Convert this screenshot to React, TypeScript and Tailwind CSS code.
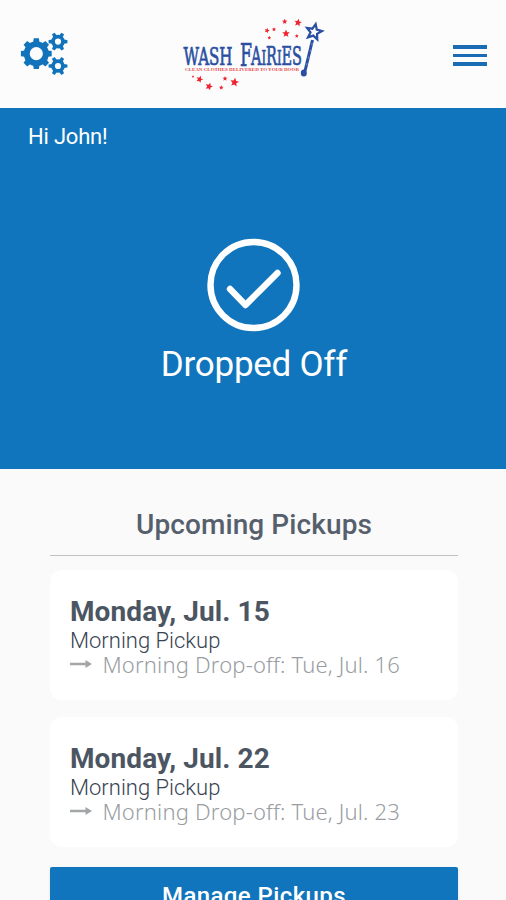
interface Pickup {
  date: string;
  pickup: string;
  dropOff: string;
}

const pickups: Pickup[] = [
  {
    date: 'Monday, Jul. 15',
    pickup: 'Morning Pickup',
    dropOff: 'Morning Drop-off: Tue, Jul. 16',
  },
  {
    date: 'Monday, Jul. 22',
    pickup: 'Morning Pickup',
    dropOff: 'Morning Drop-off: Tue, Jul. 23',
  },
];

interface GearProps {
  cx: number;
  cy: number;
  body: number;
  outer: number;
  hole: number;
  tooth: number;
  angles: number[];
}

function Gear(props: GearProps) {
  const { cx, cy, body, outer, hole, tooth, angles } = props;
  const ring = (body + hole) / 2;
  return (
    <g transform={`translate(${cx} ${cy})`}>
      <circle r={ring} fill="none" stroke="#1073bb" strokeWidth={body - hole} />
      {angles.map((angle) => (
        <path
          key={angle}
          transform={`rotate(${angle})`}
          d={`M${-tooth * 1.3} ${-ring}L${-tooth} ${-outer}H${tooth}L${tooth * 1.3} ${-ring}Z`}
          fill="#1073bb"
        />
      ))}
    </g>
  );
}

function SettingsIcon() {
  const small = [30, 90, 150, 210, 270, 330];
  return (
    <svg width="48" height="46" viewBox="20 31 48 46">
      <Gear
        cx={36.3}
        cy={53.7}
        body={12.5}
        outer={15.4}
        hole={6.6}
        tooth={2.6}
        angles={[0, 45, 90, 135, 180, 225, 270, 315]}
      />
      <Gear cx={58} cy={41.6} body={6.8} outer={9.4} hole={3.1} tooth={1.6} angles={small} />
      <Gear cx={58} cy={66} body={6.8} outer={9.4} hole={3.1} tooth={1.6} angles={small} />
    </svg>
  );
}

interface StarProps {
  x: number;
  y: number;
  r: number;
  turn?: number;
}

const STAR =
  'M0 -1L.28 -.36L.95 -.31L.42 .14L.59 .81L0 .46L-.59 .81L-.42 .14L-.95 -.31L-.28 -.36Z';

function Star(props: StarProps) {
  const { x, y, r, turn = 0 } = props;
  return (
    <path
      d={STAR}
      transform={`translate(${x} ${y}) rotate(${turn}) scale(${r})`}
      fill="#ee2330"
    />
  );
}

function Logo() {
  return (
    <svg width="146" height="76" viewBox="180 17 146 76">
      <g
        fontFamily="'DejaVu Serif Condensed', 'DejaVu Serif', serif"
        fill="#2a4fa2"
        stroke="#2a4fa2"
        strokeWidth=".7"
      >
        <text x="183.5" y="64.5" fontSize="25" textLength="49" lengthAdjust="spacingAndGlyphs">
          WASH
        </text>
        <text x="240" y="65.5" fontSize="31" textLength="12" lengthAdjust="spacingAndGlyphs">
          F
        </text>
        <text x="251" y="64.5" fontSize="26" textLength="51" lengthAdjust="spacingAndGlyphs">
          A<tspan fontSize="21">I</tspan>R<tspan fontSize="21">I</tspan>ES
        </text>
      </g>
      <text
        x="185"
        y="70.6"
        fontFamily="'Liberation Serif', serif"
        fontWeight="700"
        fontSize="4.6"
        fill="#e5484d"
        textLength="114"
        lengthAdjust="spacingAndGlyphs"
      >
        CLEAN CLOTHES DELIVERED TO YOUR DOOR
      </text>
      <Star x={298} y={22.6} r={4} turn={10} />
      <Star x={284.7} y={21.6} r={2.8} />
      <Star x={286} y={33.6} r={4} />
      <Star x={267} y={30.6} r={2.8} turn={15} />
      <Star x={274} y={29.4} r={2.2} />
      <Star x={296.8} y={36} r={2.1} />
      <Star x={269.3} y={37.8} r={2} />
      <Star x={199.6} y={79.3} r={3.7} turn={20} />
      <Star x={209} y={86.5} r={4} turn={20} />
      <Star x={234.5} y={82.4} r={4.6} turn={10} />
      <Star x={225} y={78.6} r={2.6} />
      <Star x={221.3} y={87.6} r={2.4} />
      <Star x={193} y={76.6} r={1.4} />
      <path d="M312.500 40L305 71" stroke="#2a4fa2" strokeWidth="3" />
      <path d="M312.2 43L304.6 73" stroke="#fcfcfc" strokeWidth=".4" strokeDasharray="2 5" />
      <ellipse cx="303.8" cy="73" rx="3" ry="3.6" fill="#2a4fa2" />
      <path
        d={STAR}
        transform="translate(314 32) rotate(12) scale(8)"
        fill="#fcfcfc"
        stroke="#2a4fa2"
        strokeWidth=".28"
      />
    </svg>
  );
}

function PickupCard(props: { item: Pickup }) {
  const { item } = props;
  return (
    <div className="h-[130px] rounded-xl bg-white px-5 pt-[26px]">
      <div className="text-[28px] leading-8 font-bold tracking-[0.1px] whitespace-nowrap text-[#4c5663]">
        {item.date}
      </div>
      <div className="text-[22px] leading-[25px] font-light whitespace-nowrap text-[#374352]">
        {item.pickup}
      </div>
      <div className="-mt-px flex items-center text-[#999da1]">
        <svg className="mr-[10.5px] mb-px" width="22" height="10" viewBox="0 0 22 10">
          <path d="M0 3.7H15.500V1L22 5L15.500 9V6.3H0Z" fill="#a3a6a9" />
        </svg>
        <span className="font-['Noto_Sans'] text-[22px] leading-[25px] font-light tracking-[0.17px] whitespace-nowrap">
          {item.dropOff}
        </span>
      </div>
    </div>
  );
}

export default function App() {
  return (
    <div className="h-[900px] w-[506px] overflow-hidden bg-[#fafafb] font-[Roboto,sans-serif]">
      <header className="flex h-[108px] bg-[#fcfcfc] pl-5">
        <div className="w-[160px] pt-[31px]">
          <SettingsIcon />
        </div>
        <div className="w-[273px] pt-[17px]">
          <Logo />
        </div>
        <div className="flex flex-col gap-[5px] pt-[45px]">
          <div className="h-[3.5px] w-[34px] bg-[#1a6db5]" />
          <div className="h-[3.5px] w-[34px] bg-[#1a6db5]" />
          <div className="h-[3.5px] w-[34px] bg-[#1a6db5]" />
        </div>
      </header>
      <section className="flex h-[361px] flex-col items-center bg-[#1075bc] pl-[2px] text-white">
        <div className="w-full pt-[15px] pl-[26px] text-[22px] leading-7 tracking-[-0.2px]">
          Hi John!
        </div>
        <svg className="mt-[87px]" width="94" height="94" viewBox="0 0 94 94">
          <g fill="none" stroke="#fff" strokeWidth="6.4" strokeLinecap="round" strokeLinejoin="round">
            <circle cx="46.5" cy="47" r="43" />
            <path d="M23 51L38.500 67L70.500 35" />
          </g>
        </svg>
        <div className="mt-[11px] text-[35px] leading-[44px] tracking-[-0.25px]">Dropped Off</div>
      </section>
      <main className="pr-12 pl-[50px]">
        <h2 className="h-[87px] border-b border-[#bfc1c4] pt-[38px] text-center text-[28px] leading-9 font-medium tracking-[0.1px] text-[#56606c]">
          Upcoming Pickups
        </h2>
        <div className="mt-[14px] flex flex-col gap-[17px]">
          {pickups.map((item) => (
            <PickupCard key={item.date} item={item} />
          ))}
        </div>
        <button className="mt-5 h-16 w-full rounded-[2px] bg-[#1075bc] pb-1.5 text-[24px] font-medium tracking-[0.4px] text-white shadow">
          Manage Pickups
        </button>
      </main>
    </div>
  );
}
